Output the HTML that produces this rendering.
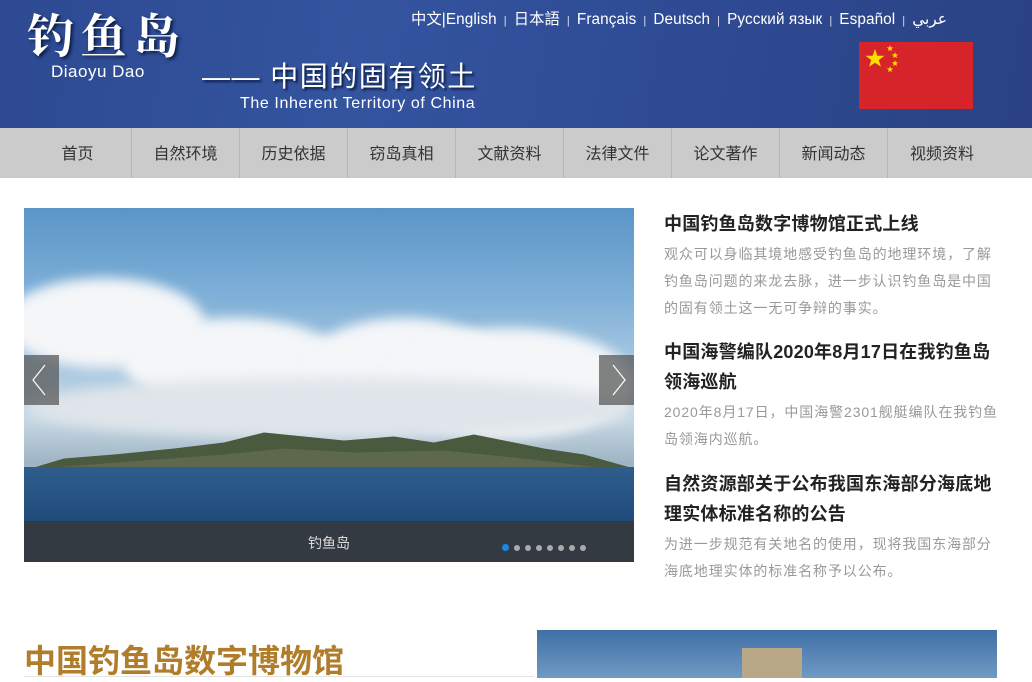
<!DOCTYPE html>
<html><head><meta charset="utf-8"><style>
*{margin:0;padding:0;box-sizing:border-box}
body{width:1032px;height:678px;overflow:hidden;background:#fff;font-family:"Liberation Sans","Noto Sans CJK SC",sans-serif;position:relative}
.hd{position:absolute;left:0;top:0;width:1032px;height:128px;background:linear-gradient(100deg,#2d4a92 0%,#34549f 35%,#2f4c96 60%,#2a4283 100%);overflow:hidden}
.logo{position:absolute;left:27px;top:6px;color:#fff;font-size:47px;font-weight:bold;letter-spacing:6px;font-family:"Noto Serif CJK SC",serif;text-shadow:2px 2px 3px #0a1a40;line-height:56px}
.dy{position:absolute;left:51px;top:62px;color:#fff;font-size:17px;letter-spacing:.5px}
.sl{position:absolute;left:202px;top:60px;color:#fff;font-size:28px;letter-spacing:1.5px;text-shadow:2px 2px 2px #0a1a40;line-height:34px}
.en{position:absolute;left:240px;top:95px;color:#fff;font-size:16px;letter-spacing:.6px}
.lang{position:absolute;left:411px;top:7px;color:#fff;font-size:15.3px;white-space:nowrap;letter-spacing:.1px}
.lang i{font-style:normal;font-size:11px;margin:0 7px;opacity:.8}
.flag{position:absolute;left:859px;top:42px;width:114px;height:67px;background:#d7242a}
.nav{position:absolute;left:0;top:128px;width:1032px;height:50px;background:#cbcbcb}
.nav div{position:absolute;top:0;height:50px;line-height:54px;font-size:16px;color:#333;text-align:center;width:108px;border-right:1px solid #b5b5b5}
.sld{position:absolute;left:24px;top:208px;width:610px;height:354px;overflow:hidden;background:linear-gradient(#5a95c8 0%,#7fb0d8 25%,#a9c8e0 45%,#c6d8e4 60%,#9fb4c4 72%)}
.cl{position:absolute;background:#f4f6f8;border-radius:50%;filter:blur(6px)}
.isl{position:absolute;left:0;width:610px;height:60px}
.sea{position:absolute;left:0;top:259px;width:610px;height:60px;background:linear-gradient(#2e5d8c,#1e4a78)}
.cap{position:absolute;left:0;top:313px;width:610px;height:41px;background:#343a42;color:#ddd;font-size:14px;text-align:center;line-height:44px}
.arr{position:absolute;top:147px;width:35px;height:50px;background:rgba(90,90,90,.75)}
.dots{position:absolute;left:478px;top:330px}
.dots span{display:inline-block;width:6px;height:6px;border-radius:50%;background:#aaa;margin-right:5px}
.r{position:absolute;left:664px;width:360px}
.r h3{font-size:18px;color:#222;font-weight:bold;line-height:30px;white-space:nowrap;letter-spacing:.2px}
.r p{font-size:14px;color:#999;line-height:27px;margin-top:2px;letter-spacing:.9px;white-space:nowrap}
.bt{position:absolute;left:24px;top:636px;font-size:32px;font-weight:bold;color:#b07d2a}
.bl{position:absolute;left:24px;top:676px;width:510px;height:1px;background:#e4e4e4}
.bi{position:absolute;left:537px;top:630px;width:460px;height:48px;background:linear-gradient(#3f6fa6,#6f9ac4)}
</style></head><body>
<div class="hd">
<div class="logo">钓鱼岛</div>
<div class="dy">Diaoyu Dao</div>
<div class="sl">—— 中国的固有领土</div>
<div class="en">The Inherent Territory of China</div>
<div class="lang">中文|English<i>|</i>日本語<i>|</i>Français<i>|</i>Deutsch<i>|</i>Русский язык<i>|</i>Español<i>|</i>عربي</div>
<div class="flag"><svg width="114" height="67" viewBox="0 0 114 67">
<polygon fill="#ffde00" points="16,7 18.4,13.7 25.5,13.8 19.8,18 21.9,24.8 16,20.7 10.1,24.8 12.2,18 6.5,13.8 13.6,13.7"/>
<g fill="#ffde00"><polygon points="31,3 31.8,5.4 34.3,5.4 32.3,6.9 33,9.3 31,7.8 29,9.3 29.7,6.9 27.7,5.4 30.2,5.4"/>
<polygon transform="translate(5,7)" points="31,3 31.8,5.4 34.3,5.4 32.3,6.9 33,9.3 31,7.8 29,9.3 29.7,6.9 27.7,5.4 30.2,5.4"/>
<polygon transform="translate(5,15)" points="31,3 31.8,5.4 34.3,5.4 32.3,6.9 33,9.3 31,7.8 29,9.3 29.7,6.9 27.7,5.4 30.2,5.4"/>
<polygon transform="translate(0,21)" points="31,3 31.8,5.4 34.3,5.4 32.3,6.9 33,9.3 31,7.8 29,9.3 29.7,6.9 27.7,5.4 30.2,5.4"/></g></svg></div>
</div>
<div class="nav">
<div style="left:24px">首页</div><div style="left:132px">自然环境</div><div style="left:240px">历史依据</div><div style="left:348px">窃岛真相</div><div style="left:456px">文献资料</div><div style="left:564px">法律文件</div><div style="left:672px">论文著作</div><div style="left:780px">新闻动态</div><div style="left:888px;border:none">视频资料</div>
</div>
<div style="position:absolute;left:131px;top:128px;width:1px;height:50px;background:#b5b5b5"></div>
<div class="sld">
<div class="cl" style="left:-20px;top:70px;width:200px;height:90px"></div>
<div class="cl" style="left:100px;top:110px;width:220px;height:90px"></div>
<div class="cl" style="left:280px;top:110px;width:200px;height:100px"></div>
<div class="cl" style="left:360px;top:120px;width:250px;height:110px"></div>
<div class="cl" style="left:0;top:170px;width:610px;height:60px;background:#dfe5ea"></div>
<svg class="isl" style="top:208px" width="610" height="55" viewBox="0 0 610 55"><path d="M0,52 L40,40 L90,36 L150,30 L200,24 L240,14 L280,18 L320,22 L370,18 L410,24 L450,16 L480,22 L520,30 L560,36 L610,50 L610,55 L0,55Z" fill="#4a5a3e"/><path d="M40,48 L120,42 L200,36 L260,30 L330,34 L420,32 L500,40 L600,52 L0,55Z" fill="#6b7256" opacity=".6"/></svg>
<div class="sea"></div>
<div class="cap">钓鱼岛</div>
<div class="arr" style="left:0"><svg width="35" height="50"><path d="M21,10 L9,25 L21,40" stroke="#fff" fill="none" stroke-width="1.2"/></svg></div>
<div class="arr" style="left:575px"><svg width="35" height="50"><path d="M14,10 L26,25 L14,40" stroke="#fff" fill="none" stroke-width="1.2"/></svg></div>
<div class="dots"><span style="background:#1e88e5;width:7px;height:7px"></span><span></span><span></span><span></span><span></span><span></span><span></span><span></span></div>
</div>
<div class="r" style="top:209px"><h3>中国钓鱼岛数字博物馆正式上线</h3><p>观众可以身临其境地感受钓鱼岛的地理环境，了解<br>钓鱼岛问题的来龙去脉，进一步认识钓鱼岛是中国<br>的固有领土这一无可争辩的事实。</p></div>
<div class="r" style="top:337px"><h3>中国海警编队2020年8月17日在我钓鱼岛<br>领海巡航</h3><p>2020年8月17日，中国海警2301舰艇编队在我钓鱼<br>岛领海内巡航。</p></div>
<div class="r" style="top:469px"><h3>自然资源部关于公布我国东海部分海底地<br>理实体标准名称的公告</h3><p>为进一步规范有关地名的使用，现将我国东海部分<br>海底地理实体的标准名称予以公布。</p></div>
<div class="bt">中国钓鱼岛数字博物馆</div>
<div class="bl"></div>
<div class="bi"><div style="position:absolute;left:205px;top:18px;width:60px;height:30px;background:#b8a888"></div></div>
</body></html>
